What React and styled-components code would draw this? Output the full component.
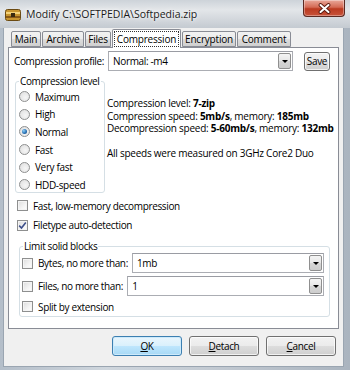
import React from "react";
import styled, { createGlobalStyle } from "styled-components";

const GlobalStyle = createGlobalStyle`
  html, body {
    margin: 0;
    padding: 0;
  }
  body {
    width: 350px;
    height: 370px;
    overflow: hidden;
    background: #fff;
    font-family: "Open Sans", "Noto Sans", sans-serif;
    font-size: 10px;
    letter-spacing: -0.35px;
    color: #000;
  }
`;

const tabs = [
  { label: "Main", width: 30 },
  { label: "Archive", width: 42 },
  { label: "Files", width: 26 },
  { label: "Compression", width: 69, active: true },
  { label: "Encryption", width: 54 },
  { label: "Comment", width: 54 },
];

const levels = ["Maximum", "High", "Normal", "Fast", "Very fast", "HDD-speed"];

export default function App() {
  return (
    <>
      <GlobalStyle />
      <Window>
        <TitleBar>
          <AppIcon viewBox="0 0 16 12">
            <rect x="0.5" y="0.5" width="15" height="11" rx="2" fill="#c9962f" stroke="#6b4a12" />
            <rect x="1" y="3" width="14" height="2" fill="#f3d27a" />
            <rect x="1" y="7" width="14" height="2" fill="#8a5a17" />
            <rect x="6" y="4" width="4" height="4" fill="#3a2a10" />
          </AppIcon>
          <Title>Modify C:\SOFTPEDIA\Softpedia.zip</Title>
          <CloseButton>
            <svg width="13" height="11" viewBox="0 0 13 11">
              <path d="M2.5 2 L10.5 9 M10.5 2 L2.5 9" stroke="#5a1a10" strokeWidth="3.8" strokeLinecap="round" />
              <path d="M2.5 2 L10.5 9 M10.5 2 L2.5 9" stroke="#fff" strokeWidth="2" strokeLinecap="round" />
            </svg>
          </CloseButton>
        </TitleBar>
        <Client>
          <TabStrip>
            {tabs.map((t) => (
              <Tab key={t.label} $width={t.width} $active={t.active}>
                {t.active ? <FocusLabel>{t.label}</FocusLabel> : t.label}
              </Tab>
            ))}
          </TabStrip>
          <Panel>
            <ProfileRow>
              <span>Compression profile:</span>
              <Combo>
                <ComboText>Normal: -m4</ComboText>
                <DropButton>
                  <Arrow />
                </DropButton>
              </Combo>
              <SmallButton>Save</SmallButton>
            </ProfileRow>
            <MiddleRow>
              <LevelGroup>
                <Legend>Compression level</Legend>
                {levels.map((l) => (
                  <RadioRow key={l}>
                    <Radio $checked={l === "Normal"} />
                    {l}
                  </RadioRow>
                ))}
              </LevelGroup>
              <Info>
                <div>Compression level: <b>7-zip</b></div>
                <div>Compression speed: <b>5mb/s</b>, memory: <b>185mb</b></div>
                <div>Decompression speed: <b>5-60mb/s</b>, memory: <b>132mb</b></div>
                <div>&nbsp;</div>
                <div>All speeds were measured on 3GHz Core2 Duo</div>
              </Info>
            </MiddleRow>
            <Options>
              <CheckRow>
                <CheckBox />
                Fast, low-memory decompression
              </CheckRow>
              <CheckRow>
                <CheckBox>
                  <svg width="9" height="9" viewBox="0 0 9 9">
                    <path d="M1.2 4.6 L3.5 7 L7.8 1.4" fill="none" stroke="#3d4f8a" strokeWidth="1.6" />
                  </svg>
                </CheckBox>
                Filetype auto-detection
              </CheckRow>
            </Options>
            <SolidGroup>
              <Legend>Limit solid blocks</Legend>
              <LimitRow>
                <CheckBox />
                <LimitLabel>Bytes, no more than:</LimitLabel>
                <Combo>
                  <ComboText>1mb</ComboText>
                  <DropButton>
                    <Arrow />
                  </DropButton>
                </Combo>
              </LimitRow>
              <LimitRow>
                <CheckBox />
                <LimitLabel>Files, no more than:</LimitLabel>
                <Combo>
                  <ComboText>1</ComboText>
                  <DropButton>
                    <Arrow />
                  </DropButton>
                </Combo>
              </LimitRow>
              <SplitRow>
                <CheckBox />
                Split by extension
              </SplitRow>
            </SolidGroup>
          </Panel>
          <ButtonBar>
            <DialogButton $default>
              <u>O</u>K
            </DialogButton>
            <DialogButton>
              <u>D</u>etach
            </DialogButton>
            <DialogButton>
              <u>C</u>ancel
            </DialogButton>
          </ButtonBar>
        </Client>
      </Window>
    </>
  );
}

const Window = styled.div`
  width: 350px;
  height: 370px;
  display: flex;
  flex-direction: column;
  box-sizing: border-box;
  background: linear-gradient(90deg, #b4bec9 0%, #cfd6dd 30%, #c3cad2 60%, #aab4bf 100%);
`;

const TitleBar = styled.div`
  height: 28px;
  flex: none;
  display: flex;
  align-items: center;
  padding-left: 5px;
  position: relative;
  background: linear-gradient(180deg, #cdd3d9 0%, #e3e6e9 35%, #c4cad1 100%);
`;

const AppIcon = styled.svg`
  width: 16px;
  height: 12px;
  margin-top: 1px;
`;

const Title = styled.span`
  margin-left: 5px;
  font-size: 10.5px;
  letter-spacing: 0;
  color: #1a1a1a;
  margin-top: -1px;
  text-shadow: 0 0 6px #fff, 0 0 3px #fff;
`;

const CloseButton = styled.div`
  position: absolute;
  top: 0;
  right: 5px;
  width: 42px;
  height: 17px;
  box-sizing: border-box;
  border: 1px solid #5c2a22;
  border-top: none;
  border-radius: 0 0 4px 4px;
  background: linear-gradient(180deg, #e9a89a 0%, #d46a55 45%, #bb3a20 55%, #c7533a 100%);
  box-shadow: inset 0 0 0 1px rgba(255, 255, 255, 0.35);
  display: flex;
  align-items: center;
  justify-content: center;
`;

const Client = styled.div`
  flex: 1;
  margin: 0 7px 4px 4px;
  background: #f0f0f0;
  display: flex;
  flex-direction: column;
  padding: 1px 4px 0 4px;
  box-shadow: 0 0 0 1px #9aa5b1;
`;

const TabStrip = styled.div`
  height: 18px;
  display: flex;
  align-items: flex-end;
  gap: 1px;
  padding-left: 3px;
  position: relative;
  z-index: 1;
`;

const Tab = styled.div`
  width: ${(p) => p.$width}px;
  height: ${(p) => (p.$active ? 19 : 16)}px;
  margin-bottom: ${(p) => (p.$active ? -1 : 0)}px;
  box-sizing: border-box;
  border: 1px solid #898c95;
  border-bottom: ${(p) => (p.$active ? "none" : "1px solid #898c95")};
  border-radius: 2px 2px 0 0;
  background: ${(p) =>
    p.$active ? "#fff" : "linear-gradient(180deg, #f2f2f2 0%, #ebebeb 50%, #dddddd 51%, #cfcfcf 100%)"};
  display: flex;
  align-items: center;
  justify-content: center;
  white-space: nowrap;
  letter-spacing: -0.2px;
`;

const FocusLabel = styled.span`
  outline: 1px dotted #333;
  outline-offset: 1px;
  padding: 0 1px;
  line-height: 12px;
`;

const Panel = styled.div`
  height: 282px;
  box-sizing: border-box;
  border: 1px solid #898c95;
  background: #fff;
  display: flex;
  flex-direction: column;
`;

const ProfileRow = styled.div`
  display: flex;
  align-items: center;
  height: 20px;
  margin-top: 3px;
  padding: 0 8px 0 5px;
  white-space: nowrap;
`;

const Combo = styled.div`
  flex: 1;
  height: 20px;
  margin-left: 4px;
  box-sizing: border-box;
  border: 1px solid #abadb3;
  border-top-color: #9a9ca3;
  background: #fff;
  display: flex;
  align-items: center;
  padding: 1px;
`;

const ComboText = styled.span`
  flex: 1;
  padding-left: 3px;
`;

const DropButton = styled.div`
  width: 13px;
  height: 16px;
  box-sizing: border-box;
  border: 1px solid #8f8f8f;
  border-radius: 2px;
  background: linear-gradient(180deg, #f4f4f4 0%, #e6e6e6 50%, #d6d6d6 51%, #cdcdcd 100%);
  display: flex;
  align-items: center;
  justify-content: center;
`;

const Arrow = styled.span`
  width: 0;
  height: 0;
  border-left: 3px solid transparent;
  border-right: 3px solid transparent;
  border-top: 3px solid #000;
  margin-top: 1px;
`;

const SmallButton = styled.div`
  width: 26px;
  height: 19px;
  margin-left: 11px;
  box-sizing: border-box;
  border: 1px solid #707070;
  border-radius: 3px;
  background: linear-gradient(180deg, #f2f2f2 0%, #ebebeb 50%, #dddddd 51%, #cfcfcf 100%);
  box-shadow: inset 0 0 0 1px rgba(255, 255, 255, 0.7);
  display: flex;
  align-items: center;
  justify-content: center;
`;

const MiddleRow = styled.div`
  display: flex;
  align-items: flex-start;
  margin-top: 3px;
  padding-left: 6px;
`;

const Group = styled.fieldset`
  margin: 0;
  padding: 0 0 0 2px;
  border: 1px solid #d5dfe5;
  border-radius: 3px;
  box-shadow: inset 0 0 0 1px #fff;
  min-width: 0;
`;

const Legend = styled.legend`
  padding: 0 1px;
  margin-left: 1px;
  line-height: 14px;
  white-space: nowrap;
`;

const LevelGroup = styled(Group)`
  width: 90px;
  box-sizing: border-box;
  height: 119px;
  flex: none;
`;

const RadioRow = styled.div`
  height: 17.6px;
  display: flex;
  align-items: center;
  gap: 5px;
  padding-left: 1px;
  white-space: nowrap;
`;

const Radio = styled.span`
  width: 11px;
  height: 11px;
  box-sizing: border-box;
  border-radius: 50%;
  border: 1px solid #8e8f8f;
  background: radial-gradient(circle at 60% 60%, #f6f6f6 0%, #dcdcdc 100%);
  position: relative;
  flex: none;
  &::after {
    content: "";
    display: ${(p) => (p.$checked ? "block" : "none")};
    position: absolute;
    left: 2px;
    top: 2px;
    width: 5px;
    height: 5px;
    border-radius: 50%;
    background: radial-gradient(circle at 35% 35%, #8fd0f5 0%, #2a74b8 55%, #173f6b 100%);
  }
`;

const Info = styled.div`
  margin-left: 2px;
  margin-top: 23px;
  line-height: 12.5px;
  white-space: nowrap;
  letter-spacing: -0.25px;
  b {
    font-weight: 700;
  }
`;

const Options = styled.div`
  display: flex;
  flex-direction: column;
  margin-top: 3px;
  padding-left: 8px;
`;

const CheckRow = styled.div`
  height: 19.5px;
  display: flex;
  align-items: center;
  gap: 5px;
  white-space: nowrap;
`;

const CheckBox = styled.span`
  width: 11px;
  height: 11px;
  box-sizing: border-box;
  border: 1px solid #8e8f8f;
  background: linear-gradient(135deg, #dcdcdc 0%, #f4f4f4 60%, #ffffff 100%);
  box-shadow: inset 0 0 0 1px #f4f4f4;
  display: flex;
  align-items: center;
  justify-content: center;
  flex: none;
`;

const SolidGroup = styled(Group)`
  margin: 4px 8px 0 10px;
  padding: 0 5px 1px 2px;
`;

const LimitRow = styled.div`
  height: 20px;
  display: flex;
  align-items: center;
  margin-bottom: 3px;
  white-space: nowrap;
`;

const LimitLabel = styled.span`
  margin-left: 5px;
`;

const SplitRow = styled(CheckRow)`
  height: 17px;
  margin-top: -1px;
`;

const ButtonBar = styled.div`
  display: flex;
  justify-content: flex-end;
  gap: 7px;
  padding: 7px 3px 0 0;
`;

const DialogButton = styled.div`
  width: 70px;
  height: 20px;
  box-sizing: border-box;
  border: 1px solid ${(p) => (p.$default ? "#3c7fb1" : "#707070")};
  border-radius: 3px;
  background: ${(p) =>
    p.$default
      ? "linear-gradient(180deg, #eaf6fd 0%, #d9f0fc 50%, #bee6fd 51%, #a7d9f5 100%)"
      : "linear-gradient(180deg, #f2f2f2 0%, #ebebeb 50%, #dddddd 51%, #cfcfcf 100%)"};
  box-shadow: inset 0 0 0 1px ${(p) => (p.$default ? "#cdeafb" : "rgba(255,255,255,0.7)")};
  display: flex;
  align-items: center;
  justify-content: center;
  u {
    text-decoration: underline;
    text-underline-offset: 1px;
  }
`;
